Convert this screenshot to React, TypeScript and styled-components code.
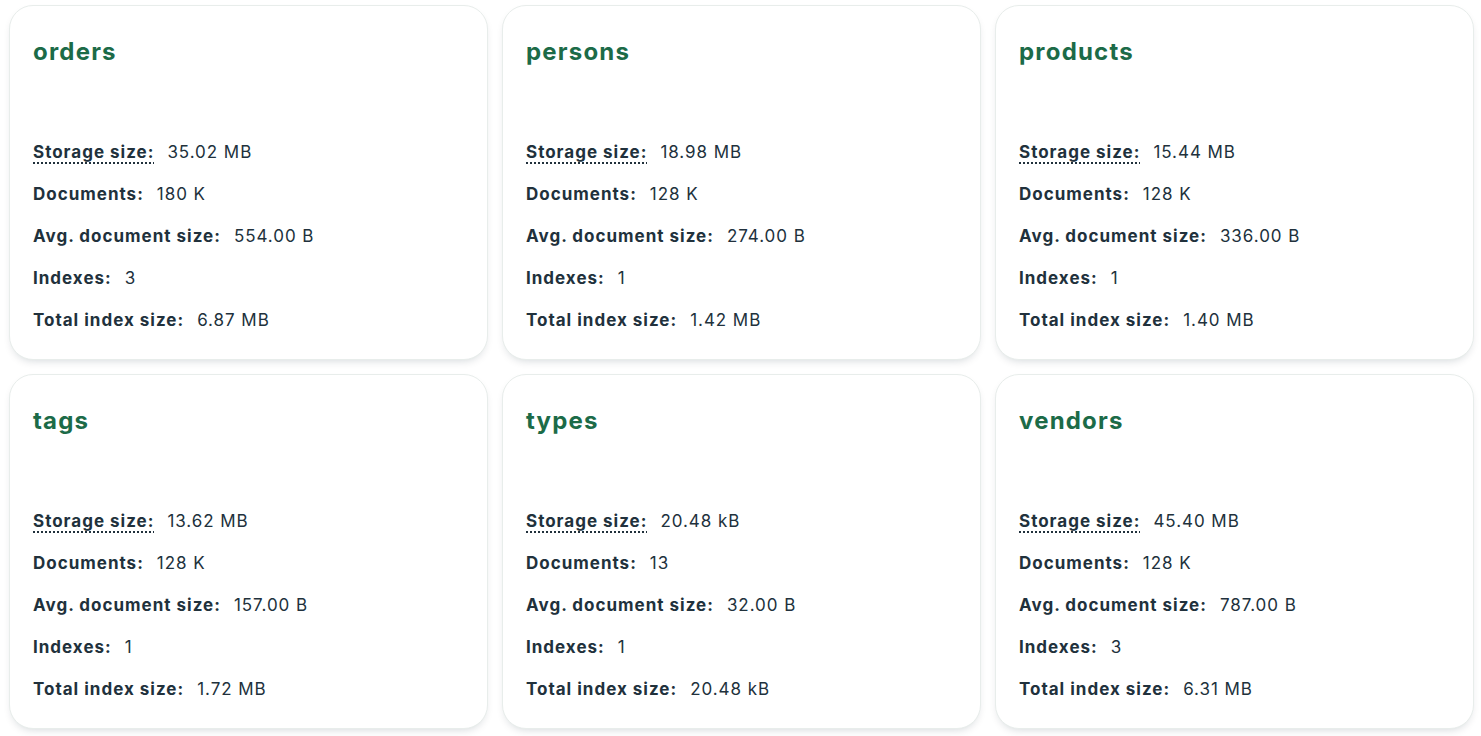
import React from "react";
import styled, { createGlobalStyle } from "styled-components";

const Global = createGlobalStyle`
  html, body { margin: 0; padding: 0; background: #ffffff; }
  body { font-family: "Inter", "Lato", sans-serif; color: #21313c; }
`;

const Grid = styled.div`
  display: grid;
  grid-template-columns: repeat(3, 1fr);
  gap: 14px;
  padding: 5px 7px 8px 9px;
`;

const Card = styled.div`
  box-sizing: border-box;
  height: 355px;
  background: #fff;
  border: 1px solid #e8edeb;
  border-radius: 24px;
  box-shadow: 0 4px 10px -4px rgba(0, 30, 43, 0.2);
  padding: 30px 23px 27px;
  display: flex;
  flex-direction: column;
`;

const Title = styled.h2`
  margin: 0;
  font-size: 24px;
  line-height: 32px;
  font-weight: 700;
  letter-spacing: 1.2px;
  color: #1c6b48;
`;

const Stats = styled.dl`
  margin: auto 0 0;
  display: flex;
  flex-direction: column;
  gap: 18px;
`;

const Row = styled.div`
  display: flex;
  align-items: baseline;
  gap: 13px;
  font-size: 17px;
  line-height: 24px;
`;

const Label = styled.dt<{ $dotted?: boolean }>`
  margin: 0;
  font-weight: 700;
  letter-spacing: 1px;
  ${(p) =>
    p.$dotted &&
    `text-decoration: underline dotted #21313c; text-decoration-thickness: 2px; text-underline-offset: 4px;`}
`;

const Value = styled.dd`
  margin: 0;
  font-weight: 400;
  letter-spacing: 0.95px;
`;

type Coll = {
  name: string;
  storage: string;
  docs: string;
  avg: string;
  indexes: string;
  total: string;
};

const data: Coll[] = [
  { name: "orders", storage: "35.02 MB", docs: "180 K", avg: "554.00 B", indexes: "3", total: "6.87 MB" },
  { name: "persons", storage: "18.98 MB", docs: "128 K", avg: "274.00 B", indexes: "1", total: "1.42 MB" },
  { name: "products", storage: "15.44 MB", docs: "128 K", avg: "336.00 B", indexes: "1", total: "1.40 MB" },
  { name: "tags", storage: "13.62 MB", docs: "128 K", avg: "157.00 B", indexes: "1", total: "1.72 MB" },
  { name: "types", storage: "20.48 kB", docs: "13", avg: "32.00 B", indexes: "1", total: "20.48 kB" },
  { name: "vendors", storage: "45.40 MB", docs: "128 K", avg: "787.00 B", indexes: "3", total: "6.31 MB" },
];

export default function App() {
  return (
    <>
      <Global />
      <Grid>
        {data.map((c) => (
          <Card key={c.name}>
            <Title>{c.name}</Title>
            <Stats>
              <Row>
                <Label $dotted>Storage size:</Label>
                <Value>{c.storage}</Value>
              </Row>
              <Row>
                <Label>Documents:</Label>
                <Value>{c.docs}</Value>
              </Row>
              <Row>
                <Label>Avg. document size:</Label>
                <Value>{c.avg}</Value>
              </Row>
              <Row>
                <Label>Indexes:</Label>
                <Value>{c.indexes}</Value>
              </Row>
              <Row>
                <Label>Total index size:</Label>
                <Value>{c.total}</Value>
              </Row>
            </Stats>
          </Card>
        ))}
      </Grid>
    </>
  );
}
